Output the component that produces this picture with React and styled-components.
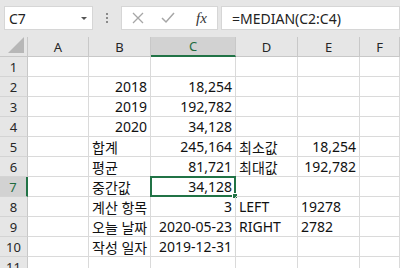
import styled, { createGlobalStyle, css } from 'styled-components';

const GlobalStyle = createGlobalStyle`
  html, body {
    margin: 0;
    padding: 0;
    background: #ffffff;
  }
  body {
    font-family: "Noto Sans", "Noto Sans CJK KR", sans-serif;
    overflow: hidden;
  }
`;

const COLS = ['A', 'B', 'C', 'D', 'E', 'F'];

const rows = [
  {},
  { B: ['2018', 'r'], C: ['18,254', 'r'] },
  { B: ['2019', 'r'], C: ['192,782', 'r'] },
  { B: ['2020', 'r'], C: ['34,128', 'r'] },
  { B: ['합계', 'l'], C: ['245,164', 'r'], D: ['최소값', 'l'], E: ['18,254', 'r'] },
  { B: ['평균', 'l'], C: ['81,721', 'r'], D: ['최대값', 'l'], E: ['192,782', 'r'] },
  { B: ['중간값', 'l'], C: ['34,128', 'r'] },
  { B: ['계산 항목', 'l'], C: ['3', 'r'], D: ['LEFT', 'l'], E: ['19278', 'l'] },
  { B: ['오늘 날짜', 'l'], C: ['2020-05-23', 'r'], D: ['RIGHT', 'l'], E: ['2782', 'l'] },
  { B: ['작성 일자', 'l'], C: ['2019-12-31', 'r'] },
  {},
];

function App() {
  return (
    <>
      <GlobalStyle />
      <Window>
        <FormulaBar>
          <NameBox>
            <span>C7</span>
            <DropArrow />
          </NameBox>
          <Grip>
            <i /><i /><i />
          </Grip>
          <ButtonBox>
            <svg width="14" height="14" viewBox="0 0 14 14">
              <path d="M2 2 L12 12 M12 2 L2 12" stroke="#a6a6a6" strokeWidth="1.3" fill="none" />
            </svg>
            <svg width="16" height="14" viewBox="0 0 16 14">
              <path d="M2 7 L6 11 L14 2" stroke="#a6a6a6" strokeWidth="1.5" fill="none" />
            </svg>
            <Fx>fx</Fx>
          </ButtonBox>
          <FormulaInput>=MEDIAN(C2:C4)</FormulaInput>
        </FormulaBar>

        <Sheet>
          <Corner>
            <svg width="16" height="16" viewBox="0 0 16 16">
              <path d="M16 0 L16 16 L0 16 Z" fill="#b7b7b7" />
            </svg>
          </Corner>
          {COLS.map((c) => (
            <ColHead key={c} $active={c === 'C'}>{c}</ColHead>
          ))}
          {rows.map((row, i) => (
            <Row key={i} row={row} n={i + 1} />
          ))}
        </Sheet>
      </Window>
    </>
  );
}

function Row({ row, n }) {
  return (
    <>
      <RowHead $active={n === 7}>{n}</RowHead>
      {COLS.map((c) => {
        const v = row[c];
        const selected = n === 7 && c === 'C';
        return (
          <Cell key={c} $align={v ? v[1] : 'l'}>
            {v ? v[0] : ''}
            {selected && (
              <Selection>
                <Handle />
              </Selection>
            )}
          </Cell>
        );
      })}
    </>
  );
}

const Window = styled.div`
  width: 400px;
  height: 268px;
  background: #e6e6e6;
  overflow: hidden;
`;

const FormulaBar = styled.div`
  display: flex;
  align-items: center;
  height: 37px;
  padding: 0 0 1px 4px;
  box-sizing: border-box;
`;

const box = css`
  height: 24px;
  background: #ffffff;
  border: 1px solid #d6d6d6;
  box-sizing: border-box;
  display: flex;
  align-items: center;
`;

const NameBox = styled.div`
  ${box};
  width: 89px;
  justify-content: space-between;
  padding: 0 5px 0 4px;
  font-size: 14px;
  color: #222;
`;

const DropArrow = styled.div`
  width: 0;
  height: 0;
  border-left: 3px solid transparent;
  border-right: 3px solid transparent;
  border-top: 3px solid #555;
`;

const Grip = styled.div`
  width: 28px;
  display: flex;
  flex-direction: column;
  align-items: center;
  gap: 2px;

  i {
    width: 2px;
    height: 2px;
    background: #8a8a8a;
  }
`;

const ButtonBox = styled.div`
  ${box};
  width: 97px;
  padding: 0 0 0 9px;
  gap: 15px;
`;

const Fx = styled.span`
  font-family: "Liberation Serif", "DejaVu Serif", serif;
  font-style: italic;
  font-size: 15px;
  color: #333;
  margin-left: 5px;
`;

const FormulaInput = styled.div`
  ${box};
  flex: 1;
  margin-left: 3px;
  padding-left: 10px;
  font-size: 14px;
  color: #222;
`;

const Sheet = styled.div`
  display: grid;
  grid-template-columns: 28px 61px 62px 85px 62px 62px 1fr;
  grid-auto-rows: 20px;
  background: #ffffff;
`;

const Corner = styled.div`
  background: #e6e6e6;
  border-right: 1px solid #c8c8c8;
  border-bottom: 1px solid #c8c8c8;
  box-sizing: border-box;
  display: flex;
  align-items: flex-end;
  justify-content: flex-end;
  padding: 0 3px 3px 0;
`;

const ColHead = styled.div`
  background: ${(p) => (p.$active ? '#d2d2d2' : '#e6e6e6')};
  color: ${(p) => (p.$active ? '#1e6b3f' : '#262626')};
  border-right: 1px solid #c8c8c8;
  border-bottom: ${(p) => (p.$active ? '2px solid #217346' : '1px solid #c8c8c8')};
  box-sizing: border-box;
  display: flex;
  align-items: center;
  justify-content: center;
  font-size: 13px;
`;

const RowHead = styled.div`
  background: ${(p) => (p.$active ? '#d2d2d2' : '#e6e6e6')};
  color: ${(p) => (p.$active ? '#1e6b3f' : '#262626')};
  border-right: ${(p) => (p.$active ? '2px solid #217346' : '1px solid #c8c8c8')};
  border-bottom: 1px solid #d4d4d4;
  box-sizing: border-box;
  display: flex;
  align-items: center;
  justify-content: center;
  font-size: 13px;
`;

const Cell = styled.div`
  position: relative;
  border-right: 1px solid #dadada;
  border-bottom: 1px solid #dadada;
  box-sizing: border-box;
  display: flex;
  align-items: center;
  justify-content: ${(p) => (p.$align === 'r' ? 'flex-end' : 'flex-start')};
  padding: 0 3px;
  font-size: 14px;
  color: #111;
  white-space: nowrap;
  overflow: visible;
`;

const Selection = styled.div`
  position: absolute;
  left: -1px;
  top: -1px;
  right: -1px;
  bottom: -1px;
  border: 2px solid #217346;
  pointer-events: none;
`;

const Handle = styled.div`
  position: absolute;
  right: -4px;
  bottom: -4px;
  width: 4px;
  height: 4px;
  background: #217346;
  border: 1px solid #ffffff;
`;

export default App;
